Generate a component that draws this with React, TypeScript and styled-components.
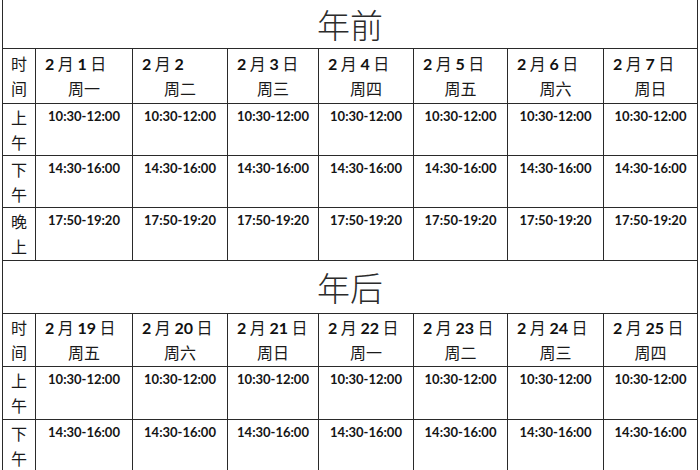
import React from "react";
import styled, { createGlobalStyle } from "styled-components";

const Global = createGlobalStyle`
  html, body { margin: 0; padding: 0; background: #fff; }
  body { font-family: "Noto Sans CJK SC", "Noto Sans", sans-serif; color: #111; overflow: hidden; }
`;

const Page = styled.div`
  width: 700px;
  height: 470px;
  overflow: hidden;
  padding-left: 2px;
  box-sizing: border-box;
`;

const Table = styled.table`
  border-collapse: collapse;
  table-layout: fixed;
  width: 695px;
  margin-top: -1px;
  td { border: 1px solid #2a2a2a; padding: 0; }
`;

const TitleCell = styled.td<{ $h: number }>`
  height: ${(p) => p.$h}px;
  text-align: center;
  vertical-align: middle;
  font-family: "Noto Sans CJK SC", sans-serif;
  font-weight: 300;
  font-size: 33px;
  line-height: 40px;
  color: #2b2b2b;
`;

const SideCell = styled.td<{ $h: number }>`
  height: ${(p) => p.$h}px;
  text-align: center;
  vertical-align: middle;
  font-size: 16px;
  line-height: 25px;
  color: #1a1a1a;
`;

const HeadCell = styled.td<{ $h: number }>`
  height: ${(p) => p.$h}px;
  vertical-align: middle;
  font-size: 16px;
  line-height: 25px;
  color: #1a1a1a;
`;

const DateLine = styled.div`
  padding-left: 9px;
  white-space: nowrap;
  b {
    font-family: Lato, "Liberation Sans", sans-serif;
    font-weight: 700;
    font-size: 16px;
    color: #111;
  }
`;

const DayLine = styled.div`
  text-align: center;
`;

const TimeCell = styled.td<{ $h: number }>`
  height: ${(p) => p.$h}px;
  vertical-align: top;
  text-align: center;
  padding-top: 4px !important;
  font-family: Lato, "Liberation Sans", sans-serif;
  font-weight: 700;
  font-size: 13px;
  line-height: 16px;
  color: #151515;
  box-sizing: border-box;
`;

const widths = [33, 97, 95, 91, 95, 94, 96, 94];

type Day = { m: string; d: string; day: string; noRi?: boolean };

const before: Day[] = [
  { m: "2", d: "1", day: "周一" },
  { m: "2", d: "2", day: "周二", noRi: true },
  { m: "2", d: "3", day: "周三" },
  { m: "2", d: "4", day: "周四" },
  { m: "2", d: "5", day: "周五" },
  { m: "2", d: "6", day: "周六" },
  { m: "2", d: "7", day: "周日" },
];

const after: Day[] = [
  { m: "2", d: "19", day: "周五" },
  { m: "2", d: "20", day: "周六" },
  { m: "2", d: "21", day: "周日" },
  { m: "2", d: "22", day: "周一" },
  { m: "2", d: "23", day: "周二" },
  { m: "2", d: "24", day: "周三" },
  { m: "2", d: "25", day: "周四" },
];

const slots = [
  { label: ["上", "午"], time: "10:30-12:00" },
  { label: ["下", "午"], time: "14:30-16:00" },
  { label: ["晚", "上"], time: "17:50-19:20" },
];

function HeaderRow({ days, h }: { days: Day[]; h: number }) {
  return (
    <tr>
      <SideCell $h={h}>
        <div>时</div>
        <div>间</div>
      </SideCell>
      {days.map((d, i) => (
        <HeadCell key={i} $h={h}>
          <DateLine>
            <b>{d.m}</b> 月 <b>{d.d}</b>
            {d.noRi ? "" : " 日"}
          </DateLine>
          <DayLine>{d.day}</DayLine>
        </HeadCell>
      ))}
    </tr>
  );
}

function SlotRow({ label, time, h }: { label: string[]; time: string; h: number }) {
  return (
    <tr>
      <SideCell $h={h}>
        <div>{label[0]}</div>
        <div>{label[1]}</div>
      </SideCell>
      {Array.from({ length: 7 }).map((_, i) => (
        <TimeCell key={i} $h={h}>
          {time}
        </TimeCell>
      ))}
    </tr>
  );
}

export default function App() {
  return (
    <>
      <Global />
      <Page>
        <Table>
          <colgroup>
            {widths.map((w, i) => (
              <col key={i} style={{ width: w }} />
            ))}
          </colgroup>
          <tbody>
            <tr>
              <TitleCell colSpan={8} $h={48}>年前</TitleCell>
            </tr>
            <HeaderRow days={before} h={54} />
            <SlotRow label={slots[0].label} time={slots[0].time} h={51} />
            <SlotRow label={slots[1].label} time={slots[1].time} h={51} />
            <SlotRow label={slots[2].label} time={slots[2].time} h={52} />
            <tr>
              <TitleCell colSpan={8} $h={52}>年后</TitleCell>
            </tr>
            <HeaderRow days={after} h={52} />
            <SlotRow label={slots[0].label} time={slots[0].time} h={52} />
            <SlotRow label={slots[1].label} time={slots[1].time} h={52} />
          </tbody>
        </Table>
      </Page>
    </>
  );
}
